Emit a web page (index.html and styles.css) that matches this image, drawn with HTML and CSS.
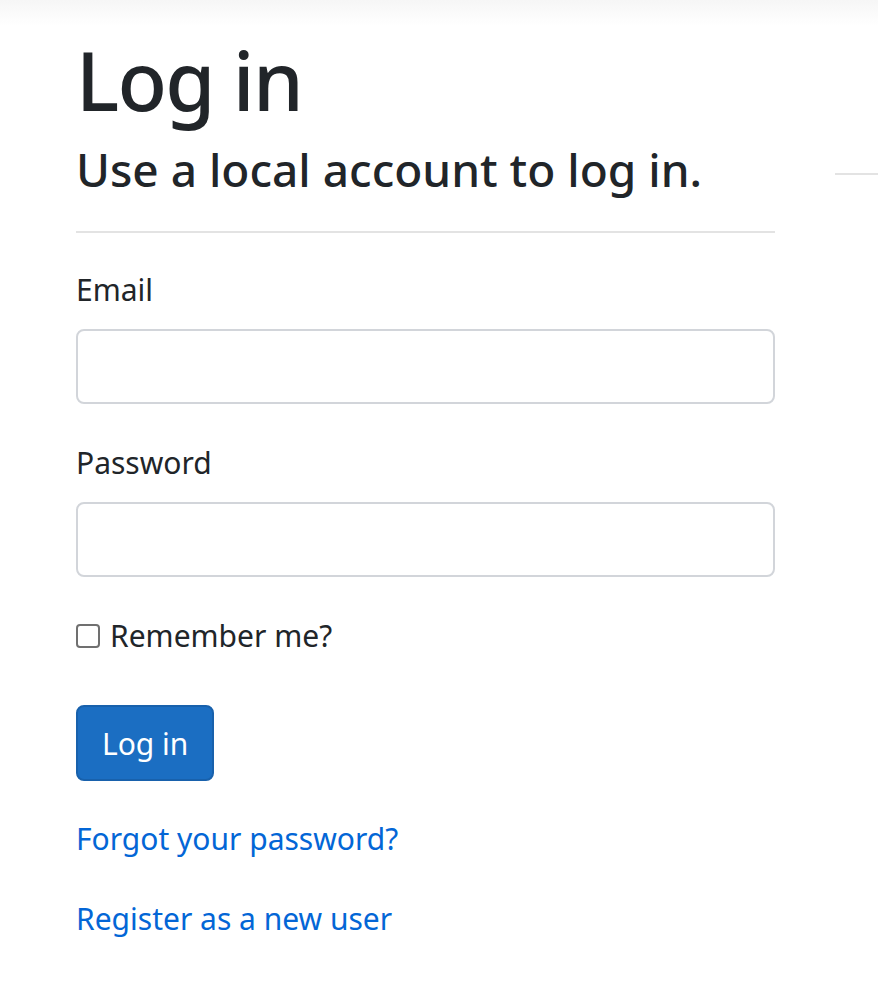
FILE: index.html
```html
<!DOCTYPE html>
<html lang="en">

<head>
    <meta charset="UTF-8">
    <meta name="viewport" content="width=device-width, initial-scale=1.0">
    <title>Log in</title>
    <link rel="stylesheet" href="styles.css">
</head>

<body>
    <div class="topbar"></div>

    <main class="page">
        <div class="login-col">
            <h1>Log in</h1>
            <section>
                <h2>Use a local account to log in.</h2>
                <hr class="rule">
                <form class="login-form">
                    <div class="field">
                        <label for="email">Email</label>
                        <input type="email" id="email" class="form-control">
                    </div>
                    <div class="field">
                        <label for="password">Password</label>
                        <input type="password" id="password" class="form-control">
                    </div>
                    <div class="check">
                        <input type="checkbox" id="remember">
                        <label for="remember">Remember me?</label>
                    </div>
                    <button type="submit" class="btn-primary">Log in</button>
                    <p class="link-row"><a href="#">Forgot your password?</a></p>
                    <p class="link-row"><a href="#">Register as a new user</a></p>
                </form>
            </section>
        </div>

        <div class="side-col">
            <hr class="rule side-rule">
        </div>
    </main>
</body>

</html>
```

FILE: styles.css
```css
html,
body {
    margin: 0;
    padding: 0;
    overflow: hidden;
}

body {
    font: normal 30px/1.5 "Noto Sans", "Open Sans", sans-serif;
    color: #212529;
    background: #fff;
}

.topbar {
    height: 26px;
    background: linear-gradient(#f6f6f6, #fff);
}

.page {
    display: flex;
    gap: 60px;
    padding-left: 76px;
    margin-top: 5px;
}

.login-col {
    flex: 0 0 699px;
}

.side-col {
    flex: 1 1 auto;
    min-width: 0;
    padding-top: 142px;
}

h1,
h2 {
    margin: 0;
    font-weight: 500;
    line-height: 1.2;
}

h1 {
    font-size: 81px;
    letter-spacing: -1.8px;
    margin-bottom: 14px;
}

h2 {
    font-size: 46px;
}

.rule {
    margin: 34px 0 0;
    border: none;
    border-top: 2px solid #e3e3e3;
}

.side-rule {
    margin: 0;
}

.login-form {
    padding-top: 34px;
}

.field {
    display: flex;
    flex-direction: column;
    margin-bottom: 36px;
}

.field label {
    margin-bottom: 17px;
}

.form-control {
    box-sizing: border-box;
    height: 75px;
    width: 100%;
    border: 2px solid #d2d5da;
    border-radius: 8px;
    padding: 12px 24px;
    font: inherit;
}

.check {
    display: flex;
    align-items: center;
    gap: 10px;
    margin-bottom: 47px;
}

.check input {
    width: 24px;
    height: 24px;
    margin: 0;
    appearance: none;
    border: 2px solid #707070;
    border-radius: 4px;
    background: #fff;
}

.btn-primary {
    display: block;
    height: 76px;
    padding: 0 24px;
    border: 2px solid #1861ac;
    border-radius: 8px;
    background: #1b6ec2;
    color: #fff;
    font: inherit;
}

.link-row {
    margin: 35px 0 0;
}

.link-row + .link-row {
    margin-top: 35px;
}

a {
    color: #0366d6;
    text-decoration: none;
}
```
